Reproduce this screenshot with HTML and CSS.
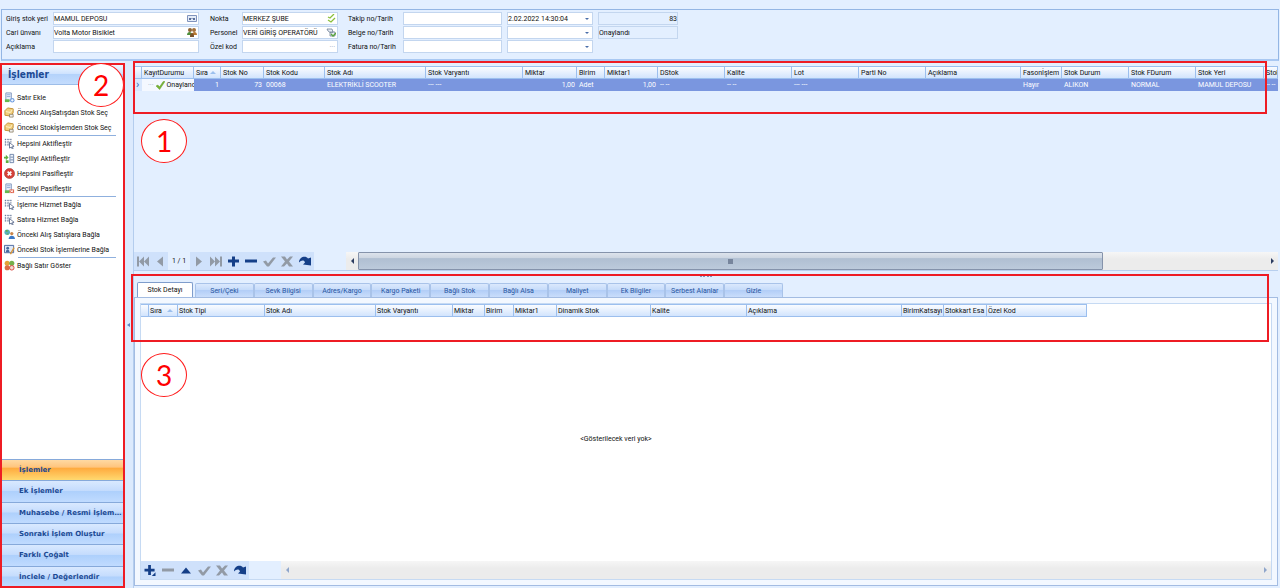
FILE: index.html
```html
<!DOCTYPE html>
<html lang="tr">
<head>
	<meta charset="utf-8">
	<title>Stok İşlemleri</title>
	<link rel="stylesheet" href="styles.css">
</head>
<body>
<svg class="sprite" aria-hidden="true">
  <symbol id="i-first" viewBox="0 0 14 10"><path d="M1 0h2v10H1zM8 0v10L3 5zM13 0v10L8 5z"/></symbol>
  <symbol id="i-prev" viewBox="0 0 14 10"><path d="M10 0v10L4 5z"/></symbol>
  <symbol id="i-next" viewBox="0 0 14 10"><path d="M4 0v10l6-5z"/></symbol>
  <symbol id="i-last" viewBox="0 0 14 10"><path d="M1 0v10l5-5zM6 0v10l5-5zM11 0h2v10h-2z"/></symbol>
  <symbol id="i-plus" viewBox="0 0 14 10"><path d="M6 0h3v3h4v3H9v4H6V6H2V3h4z"/></symbol>
  <symbol id="i-plusmenu" viewBox="0 0 14 12"><path d="M5 0h3v4h4v3H8v4H5V7H1V4h4zM13 8v4H9z"/></symbol>
  <symbol id="i-minus" viewBox="0 0 14 10"><path d="M1 3h12v3H1z"/></symbol>
  <symbol id="i-up" viewBox="0 0 14 10"><path d="M2 8l5-6 5 6z"/></symbol>
  <symbol id="i-check" viewBox="0 0 14 10"><path d="M1 5l3-1 2 3 5-6h3L7 10H5z"/></symbol>
  <symbol id="i-cross" viewBox="0 0 14 10"><path d="M1 0h4l2 3 3-3h3L9 5l4 5H9L7 7l-3 3H1l4-5z"/></symbol>
  <symbol id="i-redo" viewBox="0 0 14 10"><path d="M1 6c0-6 7-7 9-4l3-1v8l-8-1 2-2c-1-3-4-2-6 0z"/></symbol>
  <symbol id="i-add" viewBox="0 0 12 12"><path fill="#e9f0fb" stroke="#7f95bb" d="M2 1h6v8H2z"/><path stroke="#8aa5d4" d="M3 3h4M3 5h4"/><path fill="#67b84e" d="M1 8h5v3H1z"/><circle cx="9" cy="9" r="2.500" fill="#6c9be0"/><path stroke="#fff" d="M7.500 9h3M9 7.500v3"/></symbol>
  <symbol id="i-box" viewBox="0 0 12 12"><path fill="#f1cf7c" stroke="#c28c2f" d="M1 4l3-3 6 1v4l-2 4-7-1z"/><path fill="none" stroke="#fff4d0" d="M2 5l5 1 2-3"/><path fill="#eee" stroke="#84765a" stroke-width=".8" d="M6 8h4v3H6z"/></symbol>
  <symbol id="i-select" viewBox="0 0 12 12"><path fill="none" stroke="#5d6f92" stroke-dasharray="1 1" d="M1 1.500h7M1 4.500h7M1 7.500h5M1.500 1v7M4.500 1v7M7.500 1v4"/><path fill="#fff" stroke="#40527a" stroke-width=".8" d="M6 5l5 4-2 .5 1 2-1 .5-1-2-2 1z"/></symbol>
  <symbol id="i-swap" viewBox="0 0 12 12"><path fill="#eef3fb" stroke="#6d83a9" d="M6.500 1.500h4v9h-4zM7 4.500h3M7 7.500h3"/><path fill="#5fae3f" d="M0 4h2V2l3 3-3 3V6H0zM2 8h3v3H2z"/></symbol>
  <symbol id="i-stop" viewBox="0 0 12 12"><circle cx="6" cy="6" r="5.500" fill="#d5423a" stroke="#9d2620" stroke-width=".6"/><path stroke="#fff" stroke-width="1.800" d="M4 4l4 4M8 4L4 8"/></symbol>
  <symbol id="i-del" viewBox="0 0 12 12"><path fill="#e9f0fb" stroke="#7f95bb" d="M2 1h6v8H2z"/><path stroke="#8aa5d4" d="M3 3h4M3 5h4"/><path fill="#67b84e" d="M1 8h5v3H1z"/><path fill="#e0644c" d="M6 7h5v4H6z"/><path stroke="#fff" d="M7 8l3 2M10 8l-3 2"/></symbol>
  <symbol id="i-user" viewBox="0 0 12 12"><circle cx="3.500" cy="3.500" r="3" fill="#58aebd"/><path fill="#62b04f" d="M2 1h2v2H2zM3 5h2v1H3z"/><circle cx="8.500" cy="5" r="1.800" fill="#c9864a"/><path fill="#3c79c6" d="M5 11c0-5 7-5 7 0z"/></symbol>
  <symbol id="i-card" viewBox="0 0 12 12"><path fill="#dfe9f8" stroke="#46649b" d="M.5 1.500h10v8H.5z"/><circle cx="4" cy="4.500" r="1.500" fill="#44699f"/><path fill="#44699f" d="M2 9c0-4 4-4 4 0z"/><path stroke="#d99537" stroke-width="1.500" d="M11 4l-4 7"/></symbol>
  <symbol id="i-group" viewBox="0 0 12 12"><circle cx="3.500" cy="3.500" r="2.800" fill="#e3a238"/><circle cx="8.500" cy="3.500" r="2.800" fill="#74b04c"/><circle cx="3.500" cy="8.500" r="2.800" fill="#db6d43"/><circle cx="8.500" cy="8.500" r="2.500" fill="#f4d7d1" stroke="#d6443b"/></symbol>
  <symbol id="i-people" viewBox="0 0 10 9"><circle cx="3" cy="2" r="2" fill="#8b6436"/><circle cx="7" cy="2" r="2" fill="#a2703a"/><path fill="#4e8e3b" d="M0 7c0-4 5-4 5 0z"/><path fill="#b87831" d="M5 7c0-4 5-4 5 0z"/><path fill="#7a532b" d="M3 8c0-4 4-4 4 0v1H3z"/></symbol>
  <symbol id="i-more" viewBox="0 0 10 9"><path fill="#e4ecf8" stroke="#8093bd" d="M.5 1.500h9v6h-9z"/><path fill="#5a6f9b" d="M2 4h2v2H2zM4.500 4h1v1h-1zM6 4h2v2H6z"/></symbol>
  <symbol id="i-dchk" viewBox="0 0 10 9"><path fill="none" stroke="#8abf3c" stroke-width="1.300" d="M2 3l2 1 4-4M2 6l3 2 4-4"/></symbol>
  <symbol id="i-tool" viewBox="0 0 10 9"><path fill="#e8edf5" stroke="#6e7f96" stroke-width=".8" d="M1 1h5l1 3-2 1-3-2zM4 4h5v4H4z"/><path fill="none" stroke="#58a63a" stroke-width="1.300" d="M5 6l2 2 3-3"/></symbol>
  <symbol id="i-row" viewBox="0 0 10 9"><path fill="#79b536" stroke="#5b9526" stroke-width=".5" d="M0 5l2-1 2 2 4-6h2L4 9z"/></symbol>
</svg>

<header class="top">
  <form class="panel">
    <div class="fields place">
      <label for="stok">Giriş stok yeri</label>
      <div class="box"><input id="stok" value="MAMUL DEPOSU"><svg><use href="#i-more"/></svg></div>
      <label for="cari">Cari ünvanı</label>
      <div class="box"><input id="cari" value="Volta Motor Bisiklet"><svg><use href="#i-people"/></svg></div>
      <label for="acik">Açıklama</label>
      <div class="box"><input id="acik"></div>
    </div>
    <div class="fields staff">
      <label for="nokta">Nokta</label>
      <div class="box"><input id="nokta" value="MERKEZ ŞUBE"><svg><use href="#i-dchk"/></svg></div>
      <label for="pers">Personel</label>
      <div class="box"><input id="pers" value="VERİ GİRİŞ OPERATÖRÜ"><svg><use href="#i-tool"/></svg></div>
      <label for="ozel">Özel kod</label>
      <div class="box"><input id="ozel"><span class="dots">···</span></div>
    </div>
    <div class="fields docs">
      <label for="takip">Takip no/Tarih</label>
      <div class="box"><input id="takip"></div>
      <div class="box"><input aria-label="Takip tarihi" value="2.02.2022 14:30:04"><button type="button" class="drop" aria-label="Tarih seç"></button></div>
      <div class="box ro"><input class="num" aria-label="Kayıt no" value="83" readonly></div>
      <label for="belge">Belge no/Tarih</label>
      <div class="box"><input id="belge"></div>
      <div class="box"><input aria-label="Belge tarihi"><button type="button" class="drop" aria-label="Tarih seç"></button></div>
      <div class="box ro"><input aria-label="Durum" value="Onaylandı" readonly></div>
      <label for="fatura">Fatura no/Tarih</label>
      <div class="box"><input id="fatura"></div>
      <div class="box"><input aria-label="Fatura tarihi"><button type="button" class="drop" aria-label="Tarih seç"></button></div>
    </div>
  </form>
</header>

<div class="work">
  <aside class="side">
    <h2>İşlemler</h2>
    <ul class="acts">
      <li><a href="#"><svg><use href="#i-add"/></svg>Satır Ekle</a></li>
      <li><a href="#"><svg><use href="#i-box"/></svg>Önceki AlışSatışdan Stok Seç</a></li>
      <li><a href="#"><svg><use href="#i-box"/></svg>Önceki Stokİşlemden Stok Seç</a></li>
      <li class="sep"><a href="#"><svg><use href="#i-select"/></svg>Hepsini Aktifleştir</a></li>
      <li><a href="#"><svg><use href="#i-swap"/></svg>Seçiliyi Aktifleştir</a></li>
      <li><a href="#"><svg><use href="#i-stop"/></svg>Hepsini Pasifleştir</a></li>
      <li><a href="#"><svg><use href="#i-del"/></svg>Seçiliyi Pasifleştir</a></li>
      <li class="sep"><a href="#"><svg><use href="#i-select"/></svg>İşleme Hizmet Bağla</a></li>
      <li><a href="#"><svg><use href="#i-select"/></svg>Satıra Hizmet Bağla</a></li>
      <li><a href="#"><svg><use href="#i-user"/></svg>Önceki Alış Satışlara Bağla</a></li>
      <li><a href="#"><svg><use href="#i-card"/></svg>Önceki Stok İşlemlerine Bağla</a></li>
      <li class="sep"><a href="#"><svg><use href="#i-group"/></svg>Bağlı Satır Göster</a></li>
    </ul>
    <nav class="groups">
      <button class="on">İşlemler</button>
      <button>Ek İşlemler</button>
      <button>Muhasebe / Resmi İşlemleri</button>
      <button>Sonraki İşlem Oluştur</button>
      <button>Farklı Çoğalt</button>
      <button>İnclele / Değerlendir</button>
    </nav>
    <div class="mark mark2"></div>
    <div class="no no2">2</div>
  </aside>
  <div class="split"><i></i></div>

  <main class="main">
    <section class="rows">
      <table class="grid items">
        <thead>
          <tr><th></th><th>KayıtDurumu</th><th class="asc">Sıra</th><th>Stok No</th><th>Stok Kodu</th><th>Stok Adı</th><th>Stok Varyantı</th><th>Miktar</th><th>Birim</th><th>Miktar1</th><th>DStok</th><th>Kalite</th><th>Lot</th><th>Parti No</th><th>Açıklama</th><th>Fasonİşlem</th><th>Stok Durum</th><th>Stok FDurum</th><th>Stok Yeri</th><th>Stok</th></tr>
        </thead>
        <tbody>
          <tr><td class="ind">›</td><td class="state"><span>···</span><svg><use href="#i-row"/></svg>Onaylandı</td><td class="num">1</td><td class="num">73</td><td>00068</td><td>ELEKTRİKLİ SCOOTER</td><td>--- ---</td><td class="num">1,00</td><td>Adet</td><td class="num">1,00</td><td>-- --</td><td>-- --</td><td>--- ---</td><td></td><td></td><td>Hayır</td><td>ALIKON</td><td>NORMAL</td><td>MAMUL DEPOSU</td><td>-- --</td></tr>
        </tbody>
      </table>
      <div class="bar">
        <div class="tools">
          <button class="off nav" aria-label="İlk"><svg><use href="#i-first"/></svg></button>
          <button class="off nav" aria-label="Önceki"><svg><use href="#i-prev"/></svg></button>
          <span class="pos">1 / 1</span>
          <button class="off nav" aria-label="Sonraki"><svg><use href="#i-next"/></svg></button>
          <button class="off nav" aria-label="Son"><svg><use href="#i-last"/></svg></button>
          <button aria-label="Ekle"><svg><use href="#i-plus"/></svg></button>
          <button aria-label="Sil"><svg><use href="#i-minus"/></svg></button>
          <button class="off" aria-label="Kaydet"><svg><use href="#i-check"/></svg></button>
          <button class="off" aria-label="İptal"><svg><use href="#i-cross"/></svg></button>
          <button aria-label="Yenile"><svg><use href="#i-redo"/></svg></button>
        </div>
        <div class="scroll"><i class="l"></i><div class="track"><div class="thumb"><b></b></div></div><i class="r"></i></div>
      </div>
      <div class="mark mark1"></div>
      <div class="no no1">1</div>
    </section>

    <section class="detail">
      <div class="grip"></div>
      <div class="tabs" role="tablist">
        <button class="on" role="tab">Stok Detayı</button>
        <div class="rest">
          <button role="tab">Seri/Çeki</button>
          <button role="tab">Sevk Bilgisi</button>
          <button role="tab">Adres/Kargo</button>
          <button role="tab">Kargo Paketi</button>
          <button role="tab">Bağlı Stok</button>
          <button role="tab">Bağlı Alsa</button>
          <button role="tab">Maliyet</button>
          <button role="tab">Ek Bilgiler</button>
          <button role="tab">Serbest Alanlar</button>
          <button role="tab">Gizle</button>
        </div>
      </div>
      <div class="page">
        <div class="inner">
          <table class="grid parts">
            <thead>
              <tr><th></th><th class="asc">Sıra</th><th>Stok Tipi</th><th>Stok Adı</th><th>Stok Varyantı</th><th>Miktar</th><th>Birim</th><th>Miktar1</th><th>Dinamik Stok</th><th>Kalite</th><th>Açıklama</th><th>BirimKatsayı</th><th>Stokkart Esa</th><th>Özel Kod</th></tr>
            </thead>
          </table>
          <p class="empty">&lt;Gösterilecek veri yok&gt;</p>
          <div class="bar">
            <div class="tools">
              <button aria-label="Ekle"><svg><use href="#i-plusmenu"/></svg></button>
              <button class="off" aria-label="Sil"><svg><use href="#i-minus"/></svg></button>
              <button aria-label="Yukarı"><svg><use href="#i-up"/></svg></button>
              <button class="off" aria-label="Kaydet"><svg><use href="#i-check"/></svg></button>
              <button class="off" aria-label="İptal"><svg><use href="#i-cross"/></svg></button>
              <button aria-label="Yenile"><svg><use href="#i-redo"/></svg></button>
            </div>
            <div class="scroll dim"><i class="l"></i><div class="track"></div><i class="r"></i></div>
          </div>
        </div>
      </div>
      <div class="mark mark3"></div>
      <div class="no no3">3</div>
    </section>
  </main>
</div>
</body>
</html>
```

FILE: styles.css
```css
*{box-sizing:border-box;}
body{
  margin:0;
  height:100vh;
  display:flex;
  flex-direction:column;
  overflow:hidden;
  background:#e3efff;
  color:#111;
  font:7px/12px Roboto, sans-serif;
}
.sprite{position:absolute;width:0;height:0;}
button,input{font:inherit;color:inherit;border:0;padding:0;margin:0;background:none;}
a{color:inherit;text-decoration:none;}

/* top form */
.top{padding:9px 1px 0;}
.panel{
  display:flex;
  align-items:flex-start;
  height:52px;
  padding:2px 4px;
  border:1px solid #94b6e4;
  border-bottom:2px solid #a9c8f2;
}
.fields{display:grid;grid-auto-rows:13px;row-gap:1px;align-items:center;}
.place{grid-template-columns:47px 146px;margin-right:11px;}
.staff{grid-template-columns:32px 96px;margin-right:10px;}
.docs{grid-template-columns:55px 99px 91px 85px;}
.docs .box + .box{margin-left:5px;}
.fields label{white-space:nowrap;}
.box{
  display:flex;
  align-items:center;
  height:13px;
  background:#fff;
  border:1px solid #c3d6ef;
}
.box input{flex:1;min-width:0;height:11px;outline:0;}
.box svg{width:10px;height:9px;margin-right:1px;flex:none;}
.box.ro{background:#e3efff;}
.dots{color:#8a9cba;margin-right:2px;}
.num{text-align:right;}
.drop{width:10px;height:11px;display:flex;align-items:center;justify-content:center;}
.drop:before{content:"";border:2px solid transparent;border-top-color:#4a6ea9;border-bottom:0;}

/* left menu */
.work{flex:1;display:flex;min-height:0;}
.side{
  position:relative;
  width:125px;
  flex:none;
  display:flex;
  flex-direction:column;
  margin-top:2px;
  padding:2px 2px 1px;
  background:#fff;
}
.side h2{
  margin:0;
  height:20px;
  padding-left:6px;
  font:bold 10px/20px "DejaVu Sans Condensed", sans-serif;
  color:#1c4a94;
  background:linear-gradient(#f0f7ff,#cfe3fe 45%,#b4d3fb 50%,#c4dcfd);
  border-bottom:1px solid #9dbde8;
}
.acts{list-style:none;margin:5px 0 0;padding:0;flex:1;}
.acts a{display:flex;align-items:center;height:15px;padding-left:2px;gap:2px;white-space:nowrap;}
.acts svg{width:11px;height:11px;flex:none;}
.acts .sep:before{content:"";display:block;height:1px;margin:0 7px 0 16px;background:#8fb0de;}
.groups{display:flex;flex-direction:column;height:128px;}
.groups button{
  flex:1;
  padding:0 1px 0 17px;
  text-align:left;
  overflow:hidden;
  white-space:nowrap;
  text-overflow:ellipsis;
  font:bold 7px/12px "DejaVu Sans", sans-serif;
  color:#1c4a94;
  border-top:1px solid #86a9da;
  background:linear-gradient(#d9e9ff,#c5dcfd 45%,#aed0fc 50%,#c0dbff);
}
.groups .on{background:linear-gradient(#ffd9a2,#ffc57e 35%,#ffab3f 42%,#ffd970);}
.split{width:9px;flex:none;display:flex;align-items:center;background:#dceafd;border-right:1px solid #b4cdee;}
.split i{border:2px solid transparent;border-right:3px solid #5d86c2;border-left:0;margin-left:2px;}

/* grids */
.main{flex:1;min-width:0;display:flex;flex-direction:column;}
.rows{
  position:relative;
  flex:none;
  height:210px;
  padding-top:5px;
  display:flex;
  flex-direction:column;
  margin-right:2px;
  border-bottom:1px solid #b8cfee;
}
.rows .bar{margin-top:auto;}
.grid{table-layout:fixed;border-collapse:separate;border-spacing:0;}
.items{width:100%;}
.grid th,.grid td{
  height:12px;
  padding:0 2px;
  overflow:hidden;
  white-space:nowrap;
  line-height:10px;
}
.grid th{
  position:relative;
  text-align:left;
  font-weight:normal;
  border:1px solid #9cbfee;
  border-left:0;
  background:linear-gradient(#fafcff,#d2e4fd);
  height:13px;
}
.grid td{background:#7a96df;color:#fff;}
.grid .asc:after{
  content:"";
  position:absolute;
  right:4px;
  top:4px;
  border:3px solid transparent;
  border-bottom-color:#9cc0ee;
  border-top:0;
}
.grid .ind{background:#d8e7fd;color:#3d68ad;padding:0 2px;font-size:11px;}
.grid .state{background:#f4f8ff;color:#111;padding:0 0 0 6px;}
.state span{color:#9aabc6;}
.state svg{width:9px;height:9px;margin:0 2px;vertical-align:middle;}
.items th:nth-child(1){width:8px;}
.items th:nth-child(2){width:52px;}
.items th:nth-child(3){width:27px;}
.items th:nth-child(4){width:43px;}
.items th:nth-child(5){width:61px;}
.items th:nth-child(6){width:101px;}
.items th:nth-child(7){width:97px;}
.items th:nth-child(8){width:54px;}
.items th:nth-child(9){width:28px;}
.items th:nth-child(10){width:53px;}
.items th:nth-child(n+11):nth-child(-n+14){width:67px;}
.items th:nth-child(15){width:95px;}
.items th:nth-child(16){width:41px;}
.items th:nth-child(17),.items th:nth-child(18){width:67px;}
.items th:nth-child(19){width:68px;}
.items th:last-child,.items td:last-child{padding-right:0;}

.parts{width:946px;}
.grid.parts th{padding:0 1px;}
.parts th:nth-child(1){width:8px;}
.parts th:nth-child(2){width:29px;}
.parts th:nth-child(3){width:87px;}
.parts th:nth-child(4){width:111px;}
.parts th:nth-child(5){width:77px;}
.parts th:nth-child(6){width:32px;}
.parts th:nth-child(7){width:29px;}
.parts th:nth-child(8){width:43px;}
.parts th:nth-child(9){width:94px;}
.parts th:nth-child(10){width:96px;}
.parts th:nth-child(11){width:155px;}
.parts th:nth-child(12){width:42px;}
.parts th:nth-child(13){width:43px;}

/* record bar + scrollbar */
.bar{display:flex;height:18px;background:#e3efff;}
.tools{display:flex;align-items:center;height:18px;background:#cfe1fb;}
.tools button{width:18px;height:18px;color:#153f88;display:flex;align-items:center;justify-content:center;}
.tools .nav{width:17px;}
.tools .off{color:#929aa5;}
.tools svg{width:14px;height:11px;fill:currentColor;}
.pos{width:22px;height:18px;line-height:18px;text-align:center;background:#e3efff;}
.scroll{flex:1;margin-left:32px;display:flex;align-items:center;background:linear-gradient(#f6f6f6,#ececec 40%);}
.scroll i{width:12px;display:flex;justify-content:center;}
.scroll i:before{content:"";border:3px solid transparent;}
.scroll .l:before{border-right-color:#2c3c60;border-left:0;}
.scroll .r:before{border-left-color:#2c3c60;border-right:0;}
.scroll.dim .l:before{border-right-color:#8fa6cb;}
.scroll.dim .r:before{border-left-color:#8fa6cb;}
.track{flex:1;height:18px;}
.thumb{
  width:82%;
  height:18px;
  display:flex;
  align-items:center;
  justify-content:center;
  border:1px solid #8593ab;
  border-radius:1px;
  background:linear-gradient(#dde3ec,#cdd6e2 30%,#b0bfd2 35%,#bccadb);
}
.thumb b{width:5px;height:5px;background:#77859c;}

/* detail tabs */
.detail{position:relative;flex:1;min-height:0;display:flex;flex-direction:column;padding:4px 2px 2px 0;}
.grip{width:12px;height:2px;margin:0 auto 5px;border-top:2px dotted #7d96c0;}
.tabs{display:flex;align-items:flex-end;height:15px;padding-left:3px;gap:2px;}
.tabs button{
  height:14px;
  text-align:center;
  white-space:nowrap;
  color:#28559f;
  border:1px solid #a9c3e9;
  border-bottom:0;
  border-radius:2px 2px 0 0;
  background:linear-gradient(#dbe9fd,#c6dbfa 45%,#b3cef7 50%,#c9ddfb);
}
.tabs .on{width:56px;height:15px;background:#fff;color:#111;border-color:#7f9dcc;}
.rest{display:flex;width:588px;}
.rest button{flex:1 1 0;min-width:0;}
.page{flex:1;display:flex;min-height:0;padding:5px;background:#f3f8ff;border:1px solid #a3bce2;}
.inner{flex:1;min-width:0;display:flex;flex-direction:column;background:#fff;border:1px solid #c6daf3;}
.empty{flex:1;margin:0;display:flex;align-items:center;justify-content:center;padding-right:180px;}

/* red frames and numbers */
.mark{position:absolute;border:2px solid #ee1c24;pointer-events:none;z-index:2;}
.mark1{left:-1px;right:11px;top:0;height:53px;}
.mark2{inset:0;}
.mark3{left:-3px;right:11px;top:3px;height:68px;}
.no{
  position:absolute;
  width:46px;
  height:44px;
  border:1px solid #ff1a1a;
  border-radius:50%;
  background:#fff;
  color:#f00;
  font:28px/42px Lato, sans-serif;
  text-align:center;
  z-index:3;
}
.no1{left:7px;top:58px;}
.no2{left:78px;top:0;}
.no3{left:7px;top:82px;}
```
